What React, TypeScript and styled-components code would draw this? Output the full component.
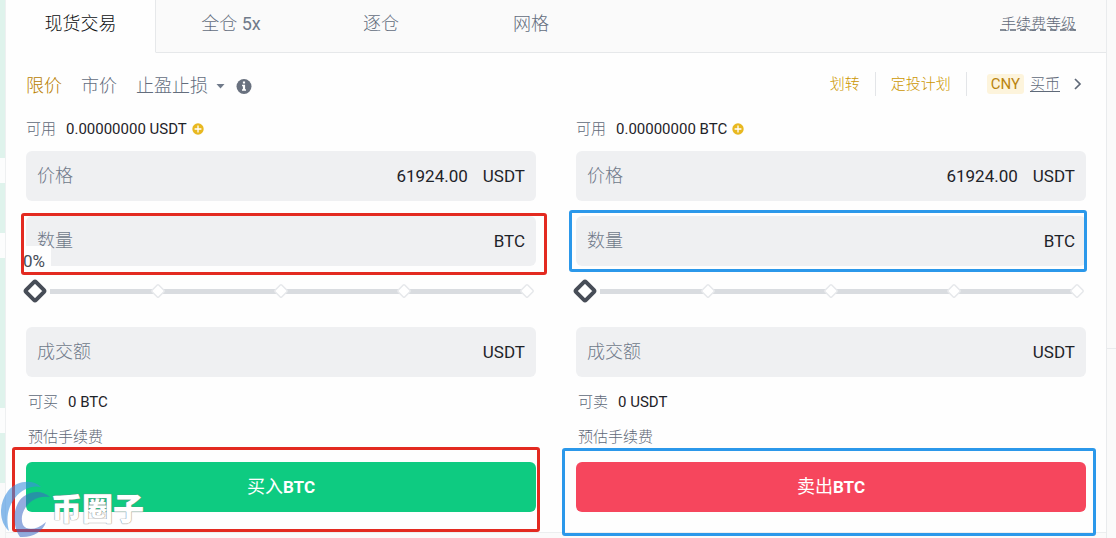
import React, { useState } from "react";
import styled, { createGlobalStyle } from "styled-components";

const GlobalStyle = createGlobalStyle`
  * { box-sizing: border-box; }
  body {
    margin: 0;
    background: #fafafa;
    color: #1e2329;
    font-family: Roboto, "Noto Sans CJK SC", sans-serif;
    font-size: 15px;
    line-height: 20px;
  }
  button, input, select { font: inherit; color: inherit; border: 0; padding: 0; margin: 0; background: none; }
  button, select { cursor: pointer; }
  a { color: inherit; text-decoration: none; }
`;

const Page = styled.div`
  position: relative;
  display: flex;
  min-height: 100vh;
  overflow: hidden;
`;

const DepthColumn = styled.div`
  flex: 0 0 6px;
  display: flex;
  flex-direction: column;
  border-right: 1px solid #eef0f1;
`;

const DepthBar = styled.div<{ $rows: number; $filled?: boolean }>`
  height: ${(p) => p.$rows * 25}px;
  background: ${(p) => (p.$filled ? "#dff3ec" : "#fcfdfd")};
  &:first-child { height: 158px; }
`;

const SideColumn = styled.aside`
  flex: 0 0 10px;
  display: flex;
  flex-direction: column;
  border-left: 1px solid #e9ebed;
`;

const SideBlock = styled.div`
  height: 349px;
  border-bottom: 1px solid #e9ebed;
`;

const Main = styled.main`
  flex: 1;
  min-width: 0;
`;

const Panel = styled.section`
  background: #fefefe;
  border-bottom: 1px solid #eceeef;
`;

const TabBar = styled.nav`
  display: flex;
  height: 53px;
`;

const Tab = styled.button<{ $active?: boolean }>`
  flex: 0 0 150px;
  padding-bottom: 5px;
  font-size: 18px;
  line-height: 24px;
  font-weight: 300;
  color: ${(p) => (p.$active ? "#0b0e11" : "#636d7d")};
  background: ${(p) => (p.$active ? "#fefefe" : "#fafafa")};
  border-bottom: 1px solid ${(p) => (p.$active ? "transparent" : "#e6e8ea")};
  border-right: ${(p) => (p.$active ? "1px solid #e6e8ea" : "0")};
`;

const Leverage = styled.span`
  font-weight: 400;
  color: #707a8a;
`;

const TabRest = styled.div`
  flex: 1;
  display: flex;
  align-items: center;
  justify-content: flex-end;
  padding: 0 30px 5px 0;
  background: #fafafa;
  border-bottom: 1px solid #e6e8ea;
`;

const FeeLink = styled.a`
  color: #5f6978;
  font-weight: 300;
  text-decoration: underline dashed;
  text-underline-offset: 1px;
`;

const Content = styled.div`
  padding: 19px 20px 20px;
`;

const Toolbar = styled.div`
  display: flex;
  justify-content: space-between;
  margin-bottom: 19px;
`;

const OrderTypes = styled.div`
  display: flex;
  align-items: center;
  height: 28px;
  gap: 19px;
  font-size: 18px;
  line-height: 28px;
  font-weight: 300;
  color: #636d7d;
`;

const OrderType = styled.button<{ $active?: boolean }>`
  color: ${(p) => (p.$active ? "#b98000" : "#636d7d")};
`;

const StopPicker = styled.label`
  display: flex;
  align-items: center;
  gap: 8px;
`;

const StopSelect = styled.select`
  appearance: none;
  width: 72px;
  line-height: 28px;
`;

const InfoButton = styled.button`
  display: flex;
  margin-left: -8px;
`;

const Shortcuts = styled.div`
  display: flex;
  align-items: center;
  height: 24px;
  font-weight: 300;
`;

const GoldLink = styled.a`
  padding: 0 15px;
  line-height: 24px;
  color: #cc9600;
  border-right: 1px solid #e3e5e8;
`;

const BuyCrypto = styled.a`
  display: flex;
  align-items: center;
  gap: 6px;
  margin-left: 20px;
  color: #5f6978;
`;

const Currency = styled.span`
  padding: 0 4px;
  border-radius: 3px;
  background: #fdf4dc;
  color: #b98410;
  font-weight: 400;
`;

const Underlined = styled.span`
  text-decoration: underline;
  text-underline-offset: 2px;
`;

const ChevronSlot = styled.span`
  display: flex;
  padding: 0 4px 0 7px;
`;

const Forms = styled.div`
  display: grid;
  grid-template-columns: 1fr 1fr;
  gap: 40px;
`;

const Form = styled.form`
  display: flex;
  flex-direction: column;
  min-width: 0;
`;

const InfoRow = styled.div<{ $top?: number; $inset?: boolean }>`
  display: flex;
  align-items: center;
  height: 20px;
  gap: 10px;
  margin-top: ${(p) => p.$top ?? 0}px;
  padding-left: ${(p) => (p.$inset ? 2 : 0)}px;
`;

const Muted = styled.span`
  color: #5f6978;
  font-weight: 300;
`;

const AddButton = styled.button`
  display: flex;
  margin-left: -5px;
`;

const Fields = styled.div`
  display: flex;
  flex-direction: column;
  gap: 15px;
  margin-top: 12px;
`;

const Anchor = styled.div`
  position: relative;
`;

const Field = styled.label`
  display: flex;
  align-items: center;
  gap: 15px;
  height: 50px;
  padding: 0 11px;
  border-radius: 6px;
  background: #eff0f2;
  font-size: 17px;
`;

const FieldName = styled.span`
  font-size: 18px;
  font-weight: 300;
  color: #707a8a;
`;

const FieldInput = styled.input`
  flex: 1;
  min-width: 0;
  text-align: right;
  outline: none;
`;

const Highlight = styled.div<{ $color: string; $inset: string }>`
  position: absolute;
  z-index: 2;
  inset: ${(p) => p.$inset};
  border: 3px solid ${(p) => p.$color};
  border-radius: 3px;
  pointer-events: none;
`;

const Percent = styled.output`
  position: absolute;
  z-index: 1;
  left: -3px;
  top: 30px;
  width: 28px;
  height: 26px;
  background: #fefefe;
  font-size: 17px;
  line-height: 30px;
  color: #474d57;
`;

const Slider = styled.div`
  position: relative;
  display: grid;
  align-items: center;
  height: 30px;
  margin: 10px 0 21px;
  > * { grid-area: 1 / 1; }
`;

const Rail = styled.div`
  height: 5px;
  margin: 0 10px 0 24px;
  background: #d9dce0;
`;

const Stops = styled.div`
  display: flex;
  align-items: center;
  justify-content: space-between;
  margin: 0 1px;
`;

const Stop = styled.svg`
  display: block;
  width: 16px;
  height: 16px;
`;

const Thumb = styled.svg`
  display: block;
  width: 26px;
  height: 26px;
  margin: 0 -5px;
`;

const Range = styled.input`
  width: 100%;
  height: 30px;
  opacity: 0;
  cursor: pointer;
  z-index: 1;
`;

const SubmitArea = styled(Anchor)`
  margin-top: 15px;
`;

const Submit = styled.button<{ $side: Side }>`
  display: block;
  width: 100%;
  height: 50px;
  border-radius: 6px;
  background: ${(p) => (p.$side === "buy" ? "#0ecb81" : "#f6465d")};
  color: #fff;
  font-size: 18px;
  font-weight: 400;
  b { font-size: 17px; font-weight: 700; }
`;

const Watermark = styled.div`
  position: absolute;
  z-index: 3;
  left: 0;
  bottom: 0;
  display: flex;
  align-items: flex-end;
  height: 58px;
  pointer-events: none;
`;

const WatermarkText = styled.span`
  font-size: 31px;
  line-height: 56px;
  font-weight: 900;
  color: #fff;
  text-shadow: 0 0 1px #888, 0 0 1px #888;
`;

type Side = "buy" | "sell";

const sides = {
  buy: {
    unit: "USDT", outUnit: "BTC", can: "可买", action: "买入", color: "#e32a20",
    fieldInset: "-3px -11px -9px -5px", buttonInset: "-15px -4px -20px -14px",
  },
  sell: {
    unit: "BTC", outUnit: "USDT", can: "可卖", action: "卖出", color: "#2b98ea",
    fieldInset: "-6px -1px -6px -7px", buttonInset: "-14px -10px -24px -14px",
  },
};

function PlusIcon() {
  return (
    <svg width="12" height="12" viewBox="0 0 12 12" aria-hidden="true">
      <circle cx="6" cy="6" r="5.7" fill="#e8b820" />
      <path d="M6 2.6v6.8M2.6 6h6.8" stroke="#fff" strokeWidth="1.3" />
    </svg>
  );
}

function OrderForm({ side }: { side: Side }) {
  const s = sides[side];
  const [price, setPrice] = useState("61924.00");
  const [amount, setAmount] = useState("");
  const [total, setTotal] = useState("");
  const [percent, setPercent] = useState(0);
  return (
    <Form onSubmit={(e) => e.preventDefault()}>
      <InfoRow>
        <Muted>可用</Muted>
        <span>0.00000000 {s.unit}</span>
        <AddButton type="button" aria-label="充值"><PlusIcon /></AddButton>
      </InfoRow>
      <Fields>
        <Field>
          <FieldName>价格</FieldName>
          <FieldInput value={price} onChange={(e) => setPrice(e.target.value)} />
          <span>USDT</span>
        </Field>
        <Anchor>
          <Field>
            <FieldName>数量</FieldName>
            <FieldInput value={amount} onChange={(e) => setAmount(e.target.value)} />
            <span>BTC</span>
          </Field>
          {side === "buy" && <Percent>{percent}%</Percent>}
          <Highlight $color={s.color} $inset={s.fieldInset} />
        </Anchor>
      </Fields>
      <Slider>
        <Rail />
        <Stops>
          <Thumb viewBox="0 0 26 26" aria-hidden="true">
            <rect x="6" y="6" width="14" height="14" rx="1.5" transform="rotate(45 13 13)" fill="#fff" stroke="#474d57" strokeWidth="4" />
          </Thumb>
          {[25, 50, 75, 100].map((n) => (
            <Stop key={n} viewBox="0 0 16 16" aria-hidden="true">
              <rect x="3.3" y="3.3" width="9.4" height="9.4" rx="1" transform="rotate(45 8 8)" fill="#fff" stroke="#e6e8eb" strokeWidth="1.5" />
            </Stop>
          ))}
        </Stops>
        <Range type="range" min={0} max={100} value={percent} aria-label="百分比" onChange={(e) => setPercent(Number(e.target.value))} />
      </Slider>
      <Field>
        <FieldName>成交额</FieldName>
        <FieldInput value={total} onChange={(e) => setTotal(e.target.value)} />
        <span>USDT</span>
      </Field>
      <InfoRow $top={15} $inset>
        <Muted>{s.can}</Muted>
        <span>0 {s.outUnit}</span>
      </InfoRow>
      <InfoRow $top={15} $inset>
        <Muted>预估手续费</Muted>
      </InfoRow>
      <SubmitArea>
        <Submit type="submit" $side={side}>{s.action}<b>BTC</b></Submit>
        <Highlight $color={s.color} $inset={s.buttonInset} />
      </SubmitArea>
    </Form>
  );
}

export default function App() {
  return (
    <Page>
      <GlobalStyle />
      <DepthColumn>
        <DepthBar $rows={6} $filled />
        <DepthBar $rows={1} />
        <DepthBar $rows={2} $filled />
        <DepthBar $rows={1} />
        <DepthBar $rows={6} $filled />
        <DepthBar $rows={1} />
        <DepthBar $rows={2} $filled />
      </DepthColumn>
      <Main>
        <Panel>
          <TabBar>
            <Tab $active>现货交易</Tab>
            <Tab>全仓 <Leverage>5x</Leverage></Tab>
            <Tab>逐仓</Tab>
            <Tab>网格</Tab>
            <TabRest><FeeLink href="#fees">手续费等级</FeeLink></TabRest>
          </TabBar>
          <Content>
            <Toolbar>
              <OrderTypes>
                <OrderType $active>限价</OrderType>
                <OrderType>市价</OrderType>
                <StopPicker>
                  <StopSelect aria-label="止盈止损">
                    <option>止盈止损</option>
                  </StopSelect>
                  <svg width="9" height="6" viewBox="0 0 9 6" aria-hidden="true">
                    <path d="M0.5 1h8l-4 4.5z" fill="#707a8a" />
                  </svg>
                </StopPicker>
                <InfoButton aria-label="说明">
                  <svg width="16" height="16" viewBox="0 0 16 16" aria-hidden="true">
                    <circle cx="8" cy="8.5" r="7.5" fill="#69717f" />
                    <path d="M6.9 3.6h2.2v2H6.9zM6 6.7h3.1v4.6h.9v1.5H6v-1.5h.9V8.2H6z" fill="#fff" />
                  </svg>
                </InfoButton>
              </OrderTypes>
              <Shortcuts>
                <GoldLink href="#transfer">划转</GoldLink>
                <GoldLink href="#plan">定投计划</GoldLink>
                <BuyCrypto href="#buy">
                  <Currency>CNY</Currency>
                  <Underlined>买币</Underlined>
                  <ChevronSlot>
                    <svg width="9" height="12" viewBox="0 0 9 12" aria-hidden="true">
                      <path d="M2 1l5 5-5 5" fill="none" stroke="#5f6978" strokeWidth="1.7" />
                    </svg>
                  </ChevronSlot>
                </BuyCrypto>
              </Shortcuts>
            </Toolbar>
            <Forms>
              <OrderForm side="buy" />
              <OrderForm side="sell" />
            </Forms>
          </Content>
        </Panel>
      </Main>
      <SideColumn><SideBlock /></SideColumn>
      <Watermark>
        <svg width="51" height="58" viewBox="0 0 51 58" aria-hidden="true">
          <path d="M41 7C33-1 17 0 8 11C-2 24-1 42 9 51C6 40 7 28 15 18C22 9 32 5 41 7Z" fill="#3d8fe0" fillOpacity=".6" />
          <path d="M50 17C40 8 24 12 18 23C12 34 14 49 20 57C32 58 43 52 46 42C37 50 27 51 23 45C18 34 29 14 50 17Z" fill="#3a68c4" fillOpacity=".55" />
        </svg>
        <WatermarkText>币圈子</WatermarkText>
      </Watermark>
    </Page>
  );
}
